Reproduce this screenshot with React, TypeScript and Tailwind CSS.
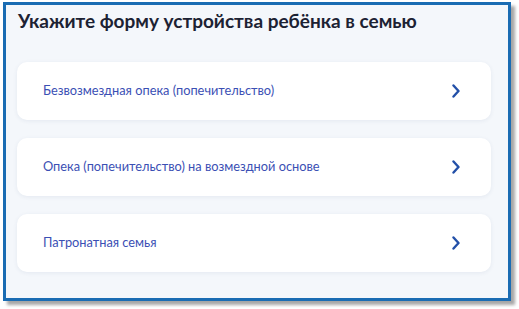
import React from "react";

const items = [
  "Безвозмездная опека (попечительство)",
  "Опека (попечительство) на возмездной основе",
  "Патронатная семья",
];

function Chevron() {
  return (
    <svg width="10" height="14" viewBox="0 0 10 14" fill="none" className="shrink-0">
      <path d="M2.5 1.5 L7.5 7 L2.5 12.5" stroke="#2350a8" strokeWidth="2.4" strokeLinecap="round" strokeLinejoin="round" />
    </svg>
  );
}

export default function App() {
  return (
    <div className="w-[519px] h-[309px] bg-white pl-[3px] pt-[2px]" style={{ fontFamily: "Lato, 'Noto Sans', sans-serif" }}>
      <div className="w-[508px] h-[299px] border-[3px] border-[#1a6cb3] bg-[#f4f7fb] shadow-[4px_4px_3px_rgba(0,0,0,0.35)] pl-[11px] pr-[17px] flex flex-col">
        <h1 className="text-[19px] leading-[28px] font-bold text-[#1c2233] pl-[1px] mt-[2px]">
          Укажите форму устройства ребёнка в семью
        </h1>
        <div className="flex flex-col gap-[18px] mt-[27px]">
          {items.map((t) => (
            <div
              key={t}
              className="h-[58px] bg-white rounded-[10px] shadow-[0_1px_4px_rgba(40,60,110,0.08)] flex items-center justify-between pl-[26px] pr-[30px]"
            >
              <span className="text-[12.8px] text-[#3b4fb4]">{t}</span>
              <Chevron />
            </div>
          ))}
        </div>
      </div>
    </div>
  );
}
